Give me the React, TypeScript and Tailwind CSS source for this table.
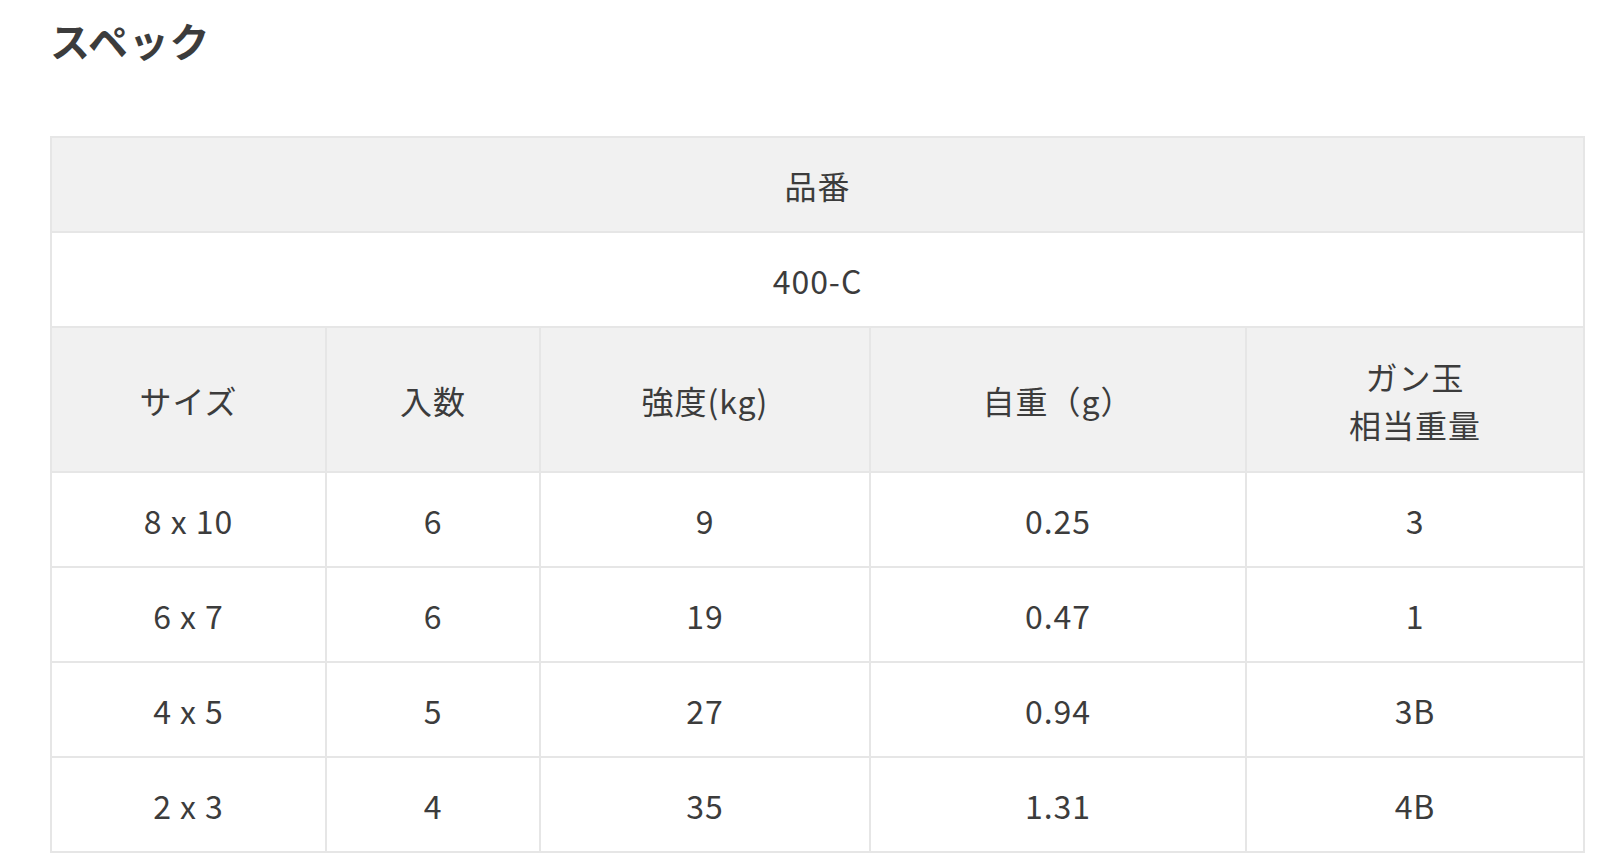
const header = ['サイズ', '入数', '強度(kg)', '自重（g）'];

const rows = [
  ['8 x 10', '6', '9', '0.25', '3'],
  ['6 x 7', '6', '19', '0.47', '1'],
  ['4 x 5', '5', '27', '0.94', '3B'],
  ['2 x 3', '4', '35', '1.31', '4B'],
];

const cell = 'border-2 border-[#e6e6e6] px-4 py-[22.5px] text-center font-normal';
const headCell = 'border-2 border-[#e6e6e6] px-4 py-[23.5px] text-center font-normal';

export default function App() {
  return (
    <main
      className="min-h-screen bg-white pl-[50px] text-[#3c3c3c]"
      style={{ fontFamily: '"Noto Sans CJK JP", "Noto Sans", sans-serif' }}
    >
      <h2 className="pt-[10px] text-[40px] font-bold leading-[1.5] tracking-[0.02em]">
        スペック
      </h2>
      <table className="mt-[66px] w-[1535px] table-fixed border-collapse text-[32px] leading-[48px] tracking-[0.03em]">
        <colgroup>
          <col className="w-[275px]" />
          <col className="w-[214px]" />
          <col className="w-[330px]" />
          <col className="w-[376px]" />
          <col />
        </colgroup>
        <tbody>
          <tr className="bg-[#f1f1f1]">
            <th colSpan={5} className={cell}>
              品番
            </th>
          </tr>
          <tr>
            <td colSpan={5} className={cell}>
              400-C
            </td>
          </tr>
          <tr className="bg-[#f1f1f1]">
            {header.map(h => (
              <th key={h} className={headCell}>
                {h}
              </th>
            ))}
            <th className={headCell}>
              ガン玉
              <br />
              相当重量
            </th>
          </tr>
          {rows.map(row => (
            <tr key={row[0]}>
              {row.map((v, i) => (
                <td key={i} className={cell}>
                  {v}
                </td>
              ))}
            </tr>
          ))}
        </tbody>
      </table>
    </main>
  );
}
